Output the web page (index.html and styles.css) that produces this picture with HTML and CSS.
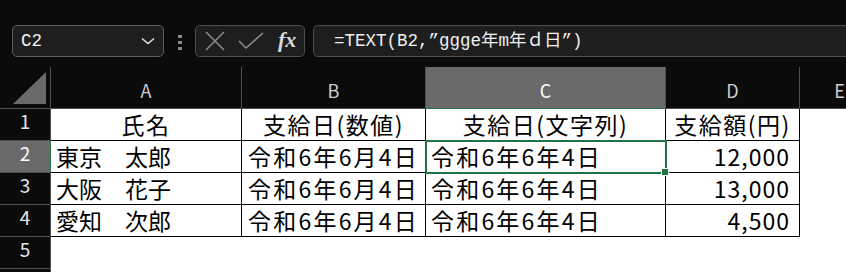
FILE: index.html
```html
<!DOCTYPE html>
<html lang="ja">
<head>
<meta charset="utf-8">
<title>Excel TEXT</title>
<link rel="stylesheet" href="styles.css">
</head>
<body>
<div class="app">
  <div class="toolbar">
    <div class="namebox">
      <span class="name">C2</span>
      <svg class="chev" width="16" height="10" viewBox="0 0 16 10"><path d="M2 2.5 L8 7.5 L14 2.5" fill="none" stroke="#e8e8e8" stroke-width="1.4"/></svg>
    </div>
    <div class="grip"><i></i><i></i><i></i></div>
    <div class="fxbox">
      <svg class="icon" width="22" height="22" viewBox="0 0 22 22"><path d="M2 2 L20 20 M20 2 L2 20" fill="none" stroke="#8a8a8a" stroke-width="1.6"/></svg>
      <svg class="icon" width="26" height="18" viewBox="0 0 26 18"><path d="M1 9 L8 16 L25 1" fill="none" stroke="#8a8a8a" stroke-width="1.6"/></svg>
      <span class="fx">fx</span>
    </div>
    <div class="formula">=TEXT(B2,”ggge年m年ｄ日”)</div>
  </div>
  <div class="sheet">
    <div class="corner"><svg width="50" height="41" viewBox="0 0 50 41"><polygon points="13,37 46,37 46,5" fill="#6b6b6b"/></svg></div>
    <div class="ch">A</div>
    <div class="ch">B</div>
    <div class="ch sel">C</div>
    <div class="ch">D</div>
    <div class="ch">E</div>

    <div class="rh">1</div>
    <div class="c ctr">氏名</div>
    <div class="c ctr">支給日(数値)</div>
    <div class="c ctr">支給日(文字列)</div>
    <div class="c ctr">支給額(円)</div>
    <div class="e"></div>

    <div class="rh sel">2</div>
    <div class="c name">東京　太郎</div>
    <div class="c date num">令和6年6月4日</div>
    <div class="c date active">令和6年6年4日</div>
    <div class="c amt num">12,000</div>
    <div class="e"></div>

    <div class="rh">3</div>
    <div class="c name">大阪　花子</div>
    <div class="c date num">令和6年6月4日</div>
    <div class="c date">令和6年6年4日</div>
    <div class="c amt num">13,000</div>
    <div class="e"></div>

    <div class="rh">4</div>
    <div class="c name">愛知　次郎</div>
    <div class="c date num">令和6年6月4日</div>
    <div class="c date">令和6年6年4日</div>
    <div class="c amt num">4,500</div>
    <div class="e"></div>

    <div class="rh">5</div>
    <div class="e"></div><div class="e"></div><div class="e"></div><div class="e"></div><div class="e"></div>

    <div class="rh">6</div>
    <div class="e"></div><div class="e"></div><div class="e"></div><div class="e"></div><div class="e"></div>
  </div>
</div>
</body>
</html>
```

FILE: styles.css
```css
html, body {
  margin: 0;
  padding: 0;
  background: #0b0b0b;
  overflow: hidden;
}
.app {
  width: 846px;
  height: 272px;
  overflow: hidden;
  background: #0b0b0b;
}
.toolbar {
  height: 67px;
  box-sizing: border-box;
  padding: 25px 0 0 12px;
  display: flex;
  align-items: flex-start;
}
.namebox {
  width: 152px;
  height: 32px;
  box-sizing: border-box;
  border: 1px solid #5e5e5e;
  border-radius: 5px;
  background: #1e1e1e;
  display: flex;
  align-items: center;
  justify-content: space-between;
  padding: 0 7px 0 8px;
}
.name {
  font-family: "Liberation Mono", "DejaVu Sans Mono", monospace;
  font-size: 17.5px;
  color: #f2f2f2;
}
.chev { display: block; }
.grip {
  width: 31px;
  display: flex;
  flex-direction: column;
  align-items: center;
  gap: 3px;
  padding-top: 10px;
}
.grip i {
  display: block;
  width: 4px;
  height: 3px;
  background: #8a8a8a;
}
.fxbox {
  width: 110px;
  height: 32px;
  box-sizing: border-box;
  border: 1px solid #4e4e4e;
  border-radius: 5px;
  background: #1e1e1e;
  display: flex;
  align-items: center;
  gap: 12px;
  padding: 0 0 0 8px;
}
.icon { display: block; }
.fx {
  font-family: "Liberation Serif", "DejaVu Serif", serif;
  font-style: italic;
  font-weight: bold;
  font-size: 22px;
  color: #d8d8d8;
  margin-left: 2px;
  margin-top: -3px;
}
.formula {
  flex: 1;
  margin-left: 8px;
  margin-right: -20px;
  height: 32px;
  box-sizing: border-box;
  border: 1px solid #4e4e4e;
  border-radius: 5px;
  background: #1e1e1e;
  padding: 0 0 0 20px;
  font-family: "Liberation Mono", "DejaVu Sans Mono", "Noto Sans CJK JP", monospace;
  font-size: 17.5px;
  line-height: 31px;
  color: #f0f0f0;
  white-space: nowrap;
}
.sheet {
  display: grid;
  grid-template-columns: 51px 191px 184px 240px 134px 80px;
  grid-template-rows: 42px repeat(6, 32px);
  background: #ffffff;
}
.corner, .ch, .rh {
  background: #0b0b0b;
  box-sizing: border-box;
  border-right: 1px solid #4f4f4f;
  border-bottom: 1px solid #4f4f4f;
}
.corner svg { display: block; }
.ch {
  color: #cfcfcf;
  font-family: "Noto Sans CJK JP", "Noto Sans", sans-serif;
  font-size: 18px;
  display: flex;
  align-items: center;
  justify-content: center;
  padding-top: 4px;
}
.ch.sel {
  background: #6a6a6a;
  color: #ffffff;
  border-bottom: 1px solid #217346;
}
.rh {
  color: #e6e6e6;
  font-family: "Noto Sans CJK JP", "Noto Sans", sans-serif;
  font-size: 19px;
  display: flex;
  align-items: center;
  justify-content: center;
  padding-bottom: 8px;
}
.rh.sel {
  background: #6a6a6a;
  color: #ffffff;
  border-right: 1px solid #217346;
}
.c {
  box-sizing: border-box;
  border-right: 1px solid #000;
  border-bottom: 1px solid #000;
  background: #fff;
  color: #000;
  font-family: "Noto Sans CJK JP", sans-serif;
  font-size: 23px;
  letter-spacing: 1.5px;
  line-height: 30px;
  padding: 0 5px;
  white-space: nowrap;
  overflow: visible;
}
.c.name { letter-spacing: 0; }
.c.date { letter-spacing: 2.2px; }
.c.amt { letter-spacing: 1px; }
.c.ctr { text-align: center; }
.c.num { text-align: right; padding-right: 6px; }
.c.amt.num { padding-right: 9px; }
.c.active { position: relative; }
.c.active::after {
  content: "";
  position: absolute;
  left: -1px;
  top: -1px;
  width: 242px;
  height: 34px;
  box-sizing: border-box;
  border: 2px solid #217346;
}
.c.active::before {
  content: "";
  position: absolute;
  left: 235px;
  top: 27px;
  width: 6px;
  height: 6px;
  background: #217346;
  border: 1px solid #fff;
  z-index: 2;
}
.e { background: #fff; }
```
